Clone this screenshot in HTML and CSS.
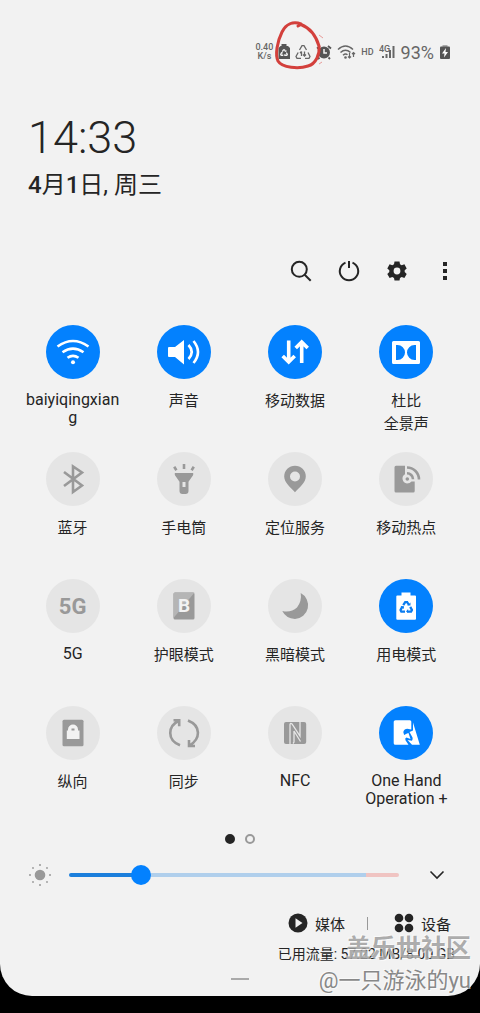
FILE: index.html
```html
<!DOCTYPE html>
<html lang="zh-CN">
<head>
<meta charset="utf-8">
<meta name="viewport" content="width=device-width, initial-scale=1">
<title>快速设置</title>
<link rel="stylesheet" href="styles.css">
</head>
<body>
<svg class="defs" aria-hidden="true">
  <symbol id="recycle" viewBox="0 0 16 14">
    <g fill="none" stroke="currentColor" stroke-width="2.600">
      <path d="M4.600 5.200 6.900 1.600h2.200l2 3.400"/>
      <path d="M12.600 7.200l2 3.600-1 1.700H9.200"/>
      <path d="M6.600 12.500H2.400l-1-1.700 2.300-4"/>
    </g>
    <path fill="currentColor" d="M9.300 5.600h3.600V2zM10.200 9.700v4.300L7.800 12.300zM1.500 6.200l4 .3-.3 3.200z"/>
  </symbol>
</svg>
<main class="panel">
  <header class="status">
    <span class="speed">0.40<br>K/s</span>
    <svg class="ic12" viewBox="0 0 12 16"><path fill="#555" d="M3.500 0h5v2h1.500l2 2v11H.5V4l2-2h1z"/><g color="#f2f2f2"><use href="#recycle" x="2" y="5" width="8" height="7"/></g></svg>
    <svg class="ic16" viewBox="0 0 16 16"><g fill="none" stroke="#666" stroke-width="1.300"><path d="M4.500 6 7 1.700h2L11.500 6M13 8.500l2 4-1 1.800h-4M6 14.300H2l-1-1.800 2.200-4"/><path d="M6.500 12V7.500M9.500 7.500V12M5 9l1.500-1.500M8 10.500 9.500 12 11 10.500"/></g></svg>
    <svg class="ic16" viewBox="0 0 16 16"><circle cx="8" cy="8.500" r="6" fill="#555"/><path d="M3.500 13.500 2 15M12.500 13.500 14 15M1 4.500 4 2M12 2l3 2.500" stroke="#555" stroke-width="1.800"/><path d="M8 5v4h3" fill="none" stroke="#f2f2f2" stroke-width="1.500"/></svg>
    <svg class="ic19" viewBox="0 0 19 16"><g fill="none" stroke="#666" stroke-width="1.500"><path d="M1 5.500Q8.500-1.500 16 5.500M3.500 8.500q5-4.500 10 0M6 11.200q2.500-2.200 4.500-.5"/><path d="M12.500 9v5M11 12.500l1.500 1.500 1.500-1.500M16.500 13V8.500M15 10l1.500-1.500L18 10" stroke-width="1.200"/></g><circle cx="8.500" cy="13.500" r="1.300" fill="#666"/></svg>
    <span class="hd">HD</span>
    <svg class="ic17" viewBox="0 0 17 16"><text x="0" y="8" class="gen">4G</text><path fill="#666" d="M3 12h2v2H3zM6.500 10h2v4h-2zM10 6h2v8h-2zM13.500 2h2v12h-2z"/></svg>
    <span class="percent">93%</span>
    <svg class="ic12" viewBox="0 0 12 16"><path fill="#aaa" d="M3.500 1h5v2h-5z"/><rect x="1" y="2.500" width="10" height="12.500" rx="1" fill="#555"/><path fill="#fff" d="M7 4 3 9.500h2.500L5 13.500 9 8H6.500z"/></svg>
  </header>
  <svg class="mark" viewBox="0 0 52 54" aria-hidden="true"><g fill="none" stroke="#d3403c" stroke-width="3" stroke-linecap="round" stroke-linejoin="round"><path d="M25 7 28 5.500C37 9 43 17 46 27c1 8-3 18-11 20C26 50 9 49 5 42 2 36 4 23 9 13 13 5 20 2 28 5"/></g><path d="M46 16l4 3M46 45l3-2" stroke="#e89a98"/></svg>

  <section class="clock">
    <div class="time">14:33</div>
    <div class="date"><b>4</b>月<b>1</b>日, 周三</div>
  </section>

  <nav class="tools">
    <button aria-label="搜索"><svg viewBox="0 0 24 24"><circle cx="10.300" cy="10.300" r="7.500"/><path d="M15.700 15.700l6 6"/></svg></button>
    <button aria-label="电源"><svg viewBox="0 0 24 24"><path d="M8.500 3.600a9.200 9.200 0 1 0 7 0M12 2v7"/></svg></button>
    <button aria-label="设置"><svg viewBox="0 0 24 24"><path class="solid" fill-rule="evenodd" d="M9.500 2.500h5l.5 2.800 1.700 1 2.700-1L21.700 9.500l-2 1.800v1.800l2 1.800-2.300 4-2.700-1-1.700 1-.5 2.700h-5L9 18.900l-1.700-1-2.700 1-2.300-4 2-1.800v-1.800l-2-1.800 2.300-4.200 2.700 1 1.700-1zM12 8.600a3.400 3.400 0 1 0 0 6.800 3.400 3.400 0 0 0 0-6.800z"/></svg></button>
    <button aria-label="更多"><svg viewBox="0 0 24 24"><path class="solid" d="M10 3h4v4h-4zM10 10h4v4h-4zM10 17h4v4h-4z"/></svg></button>
  </nav>

  <section class="tiles">
    <button class="tile on"><svg viewBox="0 0 54 54"><g class="line"><path d="M11.500 21.500Q27 10.500 42.500 21.500M16.500 27.300q10.500-7.500 21 0M21.500 32.800q5.500-4 11 0"/></g><circle cx="27" cy="37.300" r="2"/></svg><span class="latin">baiyiqingxiang</span></button>
    <button class="tile on"><svg viewBox="0 0 54 54"><path d="M12 22h6l9-7v24.500l-9-7.500h-6q-1 0-1-1v-8q0-1 1-1z"/><path class="line" d="M31.500 20q6.500 7 0 14M36.500 16q9 11 0 22"/></svg><span>声音</span></button>
    <button class="tile on"><svg viewBox="0 0 54 54"><path class="line thick" d="M20.700 15.500v21.500M14.700 31l6 6 6-6M33.700 38V17M27.700 23l6-6 6 6"/></svg><span>移动数据</span></button>
    <button class="tile on"><svg viewBox="0 0 54 54"><path fill-rule="evenodd" d="M14.500 16h25q1.500 0 1.500 1.500v20q0 1.500-1.500 1.500h-25q-1.500 0-1.500-1.500v-20q0-1.500 1.500-1.500zM17 20v15h1.500a7.500 7.500 0 0 0 0-15zM37 20v15h-1.500a7.500 7.500 0 0 1 0-15z"/></svg><span>杜比<br>全景声</span></button>

    <button class="tile"><svg viewBox="0 0 54 54"><path class="line" d="M18 20 36 33.500 27 40V14.500l9 6L18 34"/></svg><span>蓝牙</span></button>
    <button class="tile"><svg viewBox="0 0 54 54"><path fill-rule="evenodd" d="M17.800 21h18.400v2l-4.700 6.700V39q0 3-3 3h-3q-3 0-3-3v-9.300L17.800 23zM25.500 30v5h3v-5z"/><path class="line" d="M17.200 14.700l2.200 3.500M27 12v5M36.800 14.700l-2.200 3.500"/></svg><span>手电筒</span></button>
    <button class="tile"><svg viewBox="0 0 54 54"><path fill-rule="evenodd" d="M27 13.700a10.800 10.800 0 0 0-10.800 10.800C16.200 31 23 35.500 27 40.300 31 35.500 37.800 31 37.800 24.500A10.800 10.800 0 0 0 27 13.700zm0 5.800a5 5 0 1 1 0 10 5 5 0 0 1 0-10z"/></svg><span>定位服务</span></button>
    <button class="tile"><svg viewBox="0 0 54 54"><path d="M17 13.700h9v8.500a5 5 0 0 0 2 9.300q3 0 4.500-2h3.200V39q0 1.500-1.500 1.500H17q-1.500 0-1.500-1.500V15.200q0-1.500 1.500-1.500z"/><circle cx="28.300" cy="27" r="1.800"/><path class="line" d="M28 21.200a6 6 0 0 1 6 6M28 15.500a12 12 0 0 1 12 12"/></svg><span>移动热点</span></button>

    <button class="tile"><i class="glyph">5G</i><span class="latin">5G</span></button>
    <button class="tile"><svg viewBox="0 0 54 54"><rect x="16.500" y="13.500" width="21" height="27" rx="1.500"/><path fill="#b5b5b5" d="M18 13.500h19.500L16.500 39V15q0-1.500 1.500-1.500z"/><text class="eye" x="27" y="33">B</text></svg><span>护眼模式</span></button>
    <button class="tile"><svg viewBox="0 0 54 54"><path d="M32.700 14A13.800 13.800 0 0 1 27 40Q18 39.500 14.300 32 23 34 29 28.500 34 22 32.700 14z"/></svg><span>黑暗模式</span></button>
    <button class="tile on"><svg viewBox="0 0 54 54"><path d="M22.500 13.500h9v3H36q1 0 1 1v22.300q0 1-1 1H18.300q-1 0-1-1V17.500q0-1 1-1h4.200z"/><g color="#0a7cf0"><use href="#recycle" x="20.200" y="21.500" width="14" height="12.500"/></g></svg><span>用电模式</span></button>

    <button class="tile"><svg viewBox="0 0 54 54"><rect x="16.500" y="13.700" width="21" height="26.600" rx="1.500"/><path fill="#f2f2f2" fill-rule="evenodd" d="M20.800 33V24.500h1.200v-1a5 5 0 0 1 10 0v1h1.500V33zM25.500 22.500v2h3v-2z"/></svg><span>纵向</span></button>
    <button class="tile"><svg viewBox="0 0 54 54"><path class="line" d="M23 39.300C9.500 34 11 20 21.500 15M16.500 14.300h5.700v6M31 14.500c13.500 5.500 12.500 18.500 1.500 25M38 40h-6v-6"/></svg><span>同步</span></button>
    <button class="tile"><svg viewBox="0 0 54 54"><rect x="16" y="16" width="22.200" height="22" rx="2"/><path d="M22 39V18.500q.5-1.800 2-.5L32 30V15M26 25v11q-.5 1-1 1.500M26 25l6.500 10.500" fill="none" stroke="#e6e6e6" stroke-width="1.300"/></svg><span class="latin">NFC</span></button>
    <button class="tile on"><svg viewBox="0 0 54 54"><path d="M16.500 14.300h14.300q1.500 0 1.500 1.500v7.700l-4-.7q-3 0-4 3.200l.8 3 2.900-1.500 1.500-.5 2 6-4-1.500q-2 .8-1 2.700l3 4.500h-13q-1.800 0-1.800-1.500V15.800q0-1.500 1.800-1.500z"/><path d="M34 16.500l6.800 22.200H33L28.500 34l4.500.7q1-1.700.5-3.200l-3-5.500 3.500-1.500z"/></svg><span class="latin">One Hand Operation +</span></button>
  </section>

  <div class="pages"><button class="dot current" aria-label="第1页"></button><button class="dot" aria-label="第2页"></button></div>

  <div class="brightness">
    <svg class="sun" viewBox="0 0 24 24"><circle cx="12" cy="12" r="5.300" fill="#999"/><g fill="#999"><circle cx="12" cy="2" r="1"/><circle cx="12" cy="22" r="1"/><circle cx="2" cy="12" r="1"/><circle cx="22" cy="12" r="1"/><circle cx="5" cy="5" r=".9"/><circle cx="19" cy="5" r=".9"/><circle cx="5" cy="19" r=".9"/><circle cx="19" cy="19" r=".9"/></g></svg>
    <input type="range" min="0" max="100" value="20" aria-label="亮度">
    <button class="expand" aria-label="展开"><svg viewBox="0 0 16 16"><path d="M1.500 4.500 8 11l6.500-6.500"/></svg></button>
  </div>

  <div class="links">
    <button><svg viewBox="0 0 20 20"><circle cx="10" cy="10" r="9.500"/><path d="M7.500 5.200v9.600l7-4.800z" fill="#f2f2f2"/></svg>媒体</button>
    <span class="rule"></span>
    <button><svg viewBox="0 0 20 20"><circle cx="5" cy="5" r="4.300"/><circle cx="15" cy="5" r="4.300"/><circle cx="5" cy="15" r="4.300"/><circle cx="15" cy="15" r="4.300"/></svg>设备</button>
  </div>
  <p class="usage">已用流量: 57.22 MB/8.00 GB</p>
  <div class="handle"></div>
  <div class="watermark"><strong>盖乐世社区</strong><span>@一只游泳的yu</span></div>
</main>
</body>
</html>
```
FILE: styles.css
```css
* { box-sizing: border-box; }

body {
  margin: 0;
  min-height: 100vh;
  background: #000;
  color: #252525;
  font-family: Roboto, "Noto Sans CJK SC", sans-serif;
  font-size: 15px;
}

button {
  padding: 0;
  border: 0;
  background: none;
  color: inherit;
  font: inherit;
}

.defs { position: absolute; width: 0; height: 0; }

.panel {
  position: relative;
  padding: 40px 0 16px;
  border-radius: 0 0 32px 32px;
  background: #f2f2f2;
}

.status {
  display: flex;
  align-items: center;
  justify-content: flex-end;
  gap: 5px;
  height: 24px;
  padding-right: 29px;
  color: #666;
}
.status svg { flex: none; height: 16px; }
.ic12 { width: 12px; }
.ic16 { width: 16px; }
.ic17 { width: 17px; }
.ic19 { width: 19px; }
.speed { font-size: 9px; line-height: 9px; font-weight: 500; text-align: center; }
.hd { font-size: 9px; font-weight: 500; }
.gen { font-size: 9px; font-weight: 500; fill: #666; }
.percent { font-size: 18px; font-weight: 400; }

.mark {
  position: absolute;
  top: 19px;
  right: 155px;
  width: 52px;
  height: 54px;
}

.clock { padding: 47px 28px 0; }
.time { font-size: 45px; line-height: 54px; font-weight: 300; }
.date { margin-top: 5px; font-size: 24px; line-height: 30px; }
.date b { font-weight: 500; }

.tools {
  display: flex;
  justify-content: flex-end;
  margin-top: 47px;
  padding-right: 11px;
}
.tools button { display: grid; place-items: center; width: 48px; height: 48px; }
.tools svg { width: 24px; height: 24px; fill: none; stroke: #252525; stroke-width: 2; }
.tools .solid { fill: #252525; stroke: none; }

.tiles {
  display: grid;
  grid-template-columns: repeat(4, 1fr);
  grid-auto-rows: minmax(111px, auto);
  row-gap: 16px;
  margin-top: 30px;
  padding: 0 18px 0 17px;
}
.tile { display: flex; flex-direction: column; align-items: center; }
.tile svg, .glyph {
  flex: none;
  width: 54px;
  height: 54px;
  border-radius: 50%;
  background: #e5e5e5;
  color: #999;
  fill: #999;
  stroke: none;
}
.tile.on svg { background: #0381fe; color: #fff; fill: #fff; }
.tile .line { fill: none; stroke: currentColor; stroke-width: 2.6; }
.tile .thick { stroke-width: 3.6; }
.tile span { width: 96px; margin-top: 11px; line-height: 23px; overflow-wrap: anywhere; }
.tile .latin { margin-top: 12px; font-size: 16px; line-height: 18px; }
.glyph { font-size: 22px; line-height: 56px; font-weight: 700; font-style: normal; }
.eye { fill: #f2f2f2; font-size: 19px; font-weight: 700; text-anchor: middle; }

.pages { display: flex; align-items: center; justify-content: center; gap: 10px; height: 20px; margin-top: 12px; }
.dot { width: 10px; height: 10px; border: 2px solid #999; border-radius: 50%; }
.dot.current { border-color: #252525; background: #252525; }

.brightness { display: flex; align-items: center; height: 40px; margin-top: 6px; padding: 0 27px 0 28px; }
.sun { flex: none; width: 24px; height: 24px; }
.brightness input {
  flex: 1;
  min-width: 0;
  height: 20px;
  margin: 0 22px 0 17px;
  appearance: none;
  background: none;
}
.brightness input::-webkit-slider-runnable-track {
  height: 4px;
  border-radius: 2px;
  background: linear-gradient(90deg, #1c7fdc 22%, #b0cfec 22% 90%, #f0c4c2 90%);
}
.brightness input::-webkit-slider-thumb {
  appearance: none;
  width: 20px;
  height: 20px;
  margin-top: -8px;
  border-radius: 50%;
  background: #0381fe;
}
.expand { display: grid; place-items: center; width: 32px; height: 32px; }
.expand svg { width: 16px; height: 16px; fill: none; stroke: #252525; stroke-width: 1.6; }

.links { display: flex; align-items: center; justify-content: flex-end; height: 30px; margin-top: 13px; padding-right: 29px; }
.links button { display: flex; align-items: center; gap: 7px; }
.links svg { width: 20px; height: 20px; fill: #252525; }
.rule { width: 1px; height: 13px; margin: 0 26px 0 22px; background: #999; }
.usage { margin: 4px 0 0; padding-right: 25px; font-size: 14px; line-height: 24px; text-align: right; }
.handle { width: 18px; height: 2px; margin: 12px auto 0; background: #aaa; }

.watermark {
  position: absolute;
  right: 9px;
  bottom: 0;
  display: flex;
  flex-direction: column;
  align-items: flex-end;
  color: #77777799;
  text-shadow: 1px 1px 0 #ffffff99, -1px -1px 0 #ffffff99;
  white-space: nowrap;
}
.watermark strong { font-size: 25px; line-height: 34px; }
.watermark span { font-size: 22px; line-height: 30px; color: #888; }
```
